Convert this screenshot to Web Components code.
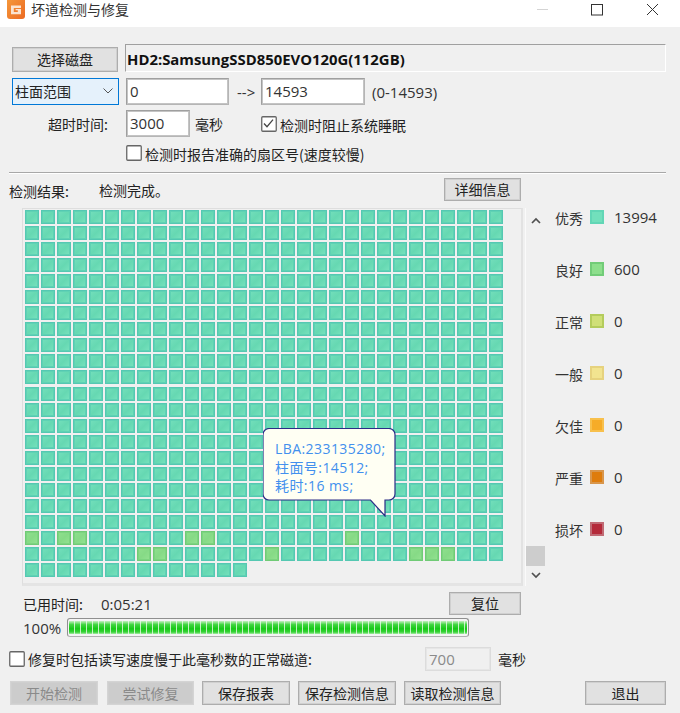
<!DOCTYPE html>
<html lang="zh">
<head>
<meta charset="utf-8">
<title>坏道检测与修复</title>
<style>
  html, body { margin: 0; padding: 0; background: #f0f0f0; }
  body { font: 14px "Noto Sans CJK SC", "Open Sans", sans-serif; color: #222; }
</style>
</head>
<body>
<bad-sector-dialog></bad-sector-dialog>

<script>
const UI_FONT = '"Open Sans", "Noto Sans CJK SC", sans-serif';

// Title bar with icon and the three window buttons
class WinTitlebar extends HTMLElement {
  constructor() {
    super();
    this.attachShadow({ mode: 'open' });
  }
  connectedCallback() {
    this.shadowRoot.innerHTML = `
      <style>
        :host { display: flex; align-items: flex-start; height: 27px; background: #fff; overflow: hidden; }
        .icon { margin-left: 7px; width: 18px; height: 19px; flex: none; }
        .title { margin-left: 6px; font-size: 14px; line-height: 19px; color: #333; flex: 1; }
        svg.ctl { flex: none; display: block; }
      </style>
      <svg class="icon" viewBox="0 0 18 19">
        <defs><linearGradient id="o" x1="0" y1="0" x2="1" y2="1"><stop offset="0" stop-color="#f59a3c"/><stop offset="1" stop-color="#ec6a22"/></linearGradient></defs>
        <rect x="0" y="-3" width="18" height="22" rx="3" fill="url(#o)"/>
        <path d="M4 5.500h10v2.400H6.800v4.200h4V10.300H8.600V8.900h5.400v5.400H4z" fill="#fbe3cf"/>
      </svg>
      <span class="title"><slot></slot></span>
      <svg class="ctl" width="176" height="20" viewBox="0 0 176 20">
        <path d="M33 9.500h11" stroke="#d4d4d4" stroke-width="1"/>
        <rect x="87.500" y="4.500" width="11" height="10.500" fill="none" stroke="#333"/>
        <path d="M143 4l11 11M154 4l-11 11" stroke="#333" fill="none"/>
      </svg>
    `;
  }
}

// Plain gray push button, "disabled" attribute greys it out
class WinButton extends HTMLElement {
  constructor() {
    super();
    this.attachShadow({ mode: 'open' });
  }
  connectedCallback() {
    this.shadowRoot.innerHTML = `
      <style>
        :host {
          display: flex; align-items: center; justify-content: center;
          box-sizing: border-box; flex: none; padding-bottom: 1px;
          background: #e1e1e1; border: 1px solid #adadad; outline: 1px solid #d0d0d0; outline-offset: -2px;
          font-size: 14px; color: #222; white-space: nowrap;
        }
        :host([disabled]) { background: #cccccc; border-color: #d4d4d4; outline-color: #cfcfcf; color: #8a8a8a; }
      </style>
      <slot></slot>
    `;
  }
}

// Edit box with a fixed width from the attribute
class WinInput extends HTMLElement {
  constructor() {
    super();
    this.attachShadow({ mode: 'open' });
  }
  connectedCallback() {
    this.shadowRoot.innerHTML = `
      <style>
        :host {
          display: flex; align-items: center; box-sizing: border-box; flex: none;
          background: #fff; border: 1px solid #9f9f9f; border-right-color: #b5b5b5; border-bottom-color: #b5b5b5;
          outline: 1px solid #c4c4c4; outline-offset: -2px;
          padding: 0 0 1px 3px; font: 15px ${UI_FONT}; color: #333;
        }
        :host([disabled]) { background: #f0f0f0; border-color: #dcdcdc; outline-color: #e6e6e6; color: #8a8a8a; }
      </style>
      <slot></slot>
    `;
  }
}

class WinCheck extends HTMLElement {
  constructor() {
    super();
    this.attachShadow({ mode: 'open' });
  }
  connectedCallback() {
    const mark = this.hasAttribute('checked')
      ? '<path d="M3 7.500l3 3.200 6-7" fill="none" stroke="#444" stroke-width="1.300"/>' : '';
    this.shadowRoot.innerHTML = `
      <style>
        :host { display: flex; align-items: center; flex: none; white-space: nowrap; font-size: 14px; color: #222; }
        svg { flex: none; margin-right: 3px; display: block; }
      </style>
      <svg width="16" height="16" viewBox="0 0 16 16">
        <rect x=".75" y=".75" width="14.500" height="14.500" rx="1" fill="#fff" stroke="#666" stroke-width="1.300"/>
        ${mark}
      </svg>
      <slot></slot>
    `;
  }
}

// Map of sector blocks: 30 columns, drawn from JS as real cells
class SectorMap extends HTMLElement {
  constructor() {
    super();
    this.attachShadow({ mode: 'open' });
  }
  connectedCallback() {
    const good = { 20: [0, 2, 3, 10, 11, 20], 21: [7, 8, 15, 24, 25, 26] };
    let cells = '';
    for (let r = 0; r < 23; r++) {
      const cols = r === 22 ? 14 : 30;
      for (let c = 0; c < cols; c++) {
        const isGood = good[r] && good[r].includes(c);
        cells += `<i class="${isGood ? 'g' : 'x'}"></i>`;
      }
    }
    this.shadowRoot.innerHTML = `
      <style>
        :host {
          display: block; position: relative; box-sizing: border-box; flex: none;
          width: 501px; height: 378px; padding: 1px 0 0 2px;
          background: #f0f0f0;
          border: 1px solid #dedede; border-right: 2px solid #e2e2e2; border-bottom: 3px solid #e4e4e4;
        }
        .grid { display: grid; grid-template-columns: repeat(30, 14px); grid-auto-rows: 14px; column-gap: 2.030px; row-gap: 2.050px; }
        i { display: block; box-sizing: border-box; border: 1px solid; }
        .x {
          border-color: #55c8b2;
          box-shadow: inset 0 0 0 1px #5fd2b4;
          background: linear-gradient(135deg, #74dfbc, #66d8b2 50%, #78e2be);
        }
        .g {
          border-color: #70cb76;
          box-shadow: inset 0 0 0 1px #7cd480;
          background: linear-gradient(135deg, #90e08e, #86da86 50%, #94e292);
        }
        .tip { position: absolute; left: 240px; top: 219px; }
      </style>
      <div class="grid">${cells}</div>
      <div class="tip"><slot></slot></div>
    `;
  }
}

// Speech-bubble tooltip over the map
class LbaTip extends HTMLElement {
  constructor() {
    super();
    this.attachShadow({ mode: 'open' });
  }
  connectedCallback() {
    this.shadowRoot.innerHTML = `
      <style>
        :host { display: block; position: relative; width: 133px; height: 89px; }
        svg { position: absolute; left: 0; top: 0; }
        .txt {
          position: relative; padding: 12px 0 0 12px;
          font: 14px/18.500px ${UI_FONT}; letter-spacing: .43px; color: #4290ee; white-space: nowrap;
        }
      </style>
      <svg width="133" height="89" viewBox="0 0 133 89">
        <path d="M6 .5H126a6 6 0 0 1 6 6V66a6 6 0 0 1-6 6H122V88L107.500 72H6a6 6 0 0 1-6-6V6.500a6 6 0 0 1 6-6z"
          fill="#fffff3" stroke="#2c2c86" stroke-width="1.200"/>
      </svg>
      <div class="txt"><slot></slot></div>
    `;
  }
}

class LegendItem extends HTMLElement {
  constructor() {
    super();
    this.attachShadow({ mode: 'open' });
  }
  connectedCallback() {
    const a = this.getAttribute('edge');
    const b = this.getAttribute('fill');
    this.shadowRoot.innerHTML = `
      <style>
        :host { display: flex; align-items: center; height: 14px; margin-bottom: 38px; font-size: 14px; color: #333; }
        .name { width: 35px; flex: none; padding-top: 2px; }
        .sw { width: 14px; height: 14px; box-sizing: border-box; border: 2px solid ${a}; background: ${b}; flex: none; }
        .num { margin-left: 10px; font: 15px ${UI_FONT}; color: #333; }
      </style>
      <span class="name"><slot></slot></span>
      <span class="sw"></span>
      <span class="num">${this.getAttribute('count')}</span>
    `;
  }
}

class ProgressStrip extends HTMLElement {
  constructor() {
    super();
    this.attachShadow({ mode: 'open' });
  }
  connectedCallback() {
    this.shadowRoot.innerHTML = `
      <style>
        :host {
          display: block; box-sizing: border-box; width: 402px; height: 19px; flex: none; padding: 2px 1px;
          background: #f4f4f4; border: 1px solid #8f8f8f; border-bottom-color: #b0b0b0; border-radius: 3px;
        }
        .bar {
          height: 100%;
          background:
            repeating-linear-gradient(90deg, transparent 0 5px, rgba(235,250,235,.8) 5px 6px),
            linear-gradient(180deg, #c4f0c0 0, #3fd53f 28%, #16c916 60%, #38d438 85%, #a8eaa6 100%);
        }
      </style>
      <div class="bar"></div>
    `;
  }
}

class ScrollColumn extends HTMLElement {
  constructor() {
    super();
    this.attachShadow({ mode: 'open' });
  }
  connectedCallback() {
    this.shadowRoot.innerHTML = `
      <style>
        :host {
          display: flex; flex-direction: column; align-items: center; box-sizing: border-box;
          width: 20px; height: 378px; flex: none; border-left: 1px solid #fafafa;
        }
        svg { display: block; flex: none; }
        .top { margin-top: 9px; }
        .fill { flex: 1; }
        .thumb { width: 19px; height: 20px; background: #cdcdcd; flex: none; }
        .bottom { margin: 5px 0 7px; }
      </style>
      <svg class="top" width="10" height="8" viewBox="0 0 10 8"><path d="M1 6l4-4 4 4" fill="none" stroke="#505050" stroke-width="1.700"/></svg>
      <div class="fill"></div>
      <div class="thumb"></div>
      <svg class="bottom" width="10" height="8" viewBox="0 0 10 8"><path d="M1 2l4 4 4-4" fill="none" stroke="#505050" stroke-width="1.700"/></svg>
    `;
  }
}

// The whole dialog
class BadSectorDialog extends HTMLElement {
  constructor() {
    super();
    this.attachShadow({ mode: 'open' });
  }
  connectedCallback() {
    this.shadowRoot.innerHTML = `
      <style>
        :host { display: block; width: 680px; height: 713px; overflow: hidden; background: #f0f0f0; font: 14px "Noto Sans CJK SC", sans-serif; color: #222; }
        .row { display: flex; align-items: center; }
        .num { font-family: ${UI_FONT}; font-size: 15px; color: #333; }
        .low { display: block; margin: 1px 0 -1px; }
        .disk {
          box-sizing: border-box; width: 541px; height: 28px; margin-left: 7px; padding: 2px 0 0 1px;
          display: flex; align-items: center;
          border: 1px solid; border-color: #a0a0a0 #fff #fff #a0a0a0;
          font: bold 14.880px "Open Sans", sans-serif; color: #111;
        }
        .sep { height: 0; margin: 0 14px 0 9px; border-top: 1px solid #a8a8a8; border-bottom: 1px solid #fff; }
        .mapwrap { display: flex; align-items: flex-start; }
        .legend { margin-left: 10px; padding-top: 2px; }
      </style>

      <win-titlebar>坏道检测与修复</win-titlebar>

      <div class="row" style="padding:17px 0 0 12px;align-items:flex-end">
        <win-button style="width:106px;height:25px">选择磁盘</win-button>
        <div class="disk">HD2:SamsungSSD850EVO120G(112GB)</div>
      </div>

      <div class="row" style="padding:6px 0 0 12px">
        <win-combo style="width:107px;height:27px">柱面范围</win-combo>
        <win-input style="width:103px;height:27px;margin-left:7px">0</win-input>
        <span class="num" style="margin-left:8px;width:24px">--&gt;</span>
        <win-input style="width:104px;height:27px">14593</win-input>
        <span class="num" style="margin-left:7px">(0-14593)</span>
      </div>

      <div class="row" style="padding:5px 0 0 48px">
        <span style="width:78px">超时时间:</span>
        <win-input style="width:64px;height:27px">3000</win-input>
        <span style="margin-left:5px;width:66px">毫秒</span>
        <win-check checked><span class="low">检测时阻止系统睡眠</span></win-check>
      </div>

      <div class="row" style="padding:6px 0 0 126px">
        <win-check><span class="low">检测时报告准确的扇区号(速度较慢)</span></win-check>
      </div>

      <div class="sep" style="margin-top:9px"></div>

      <div class="row" style="padding:4px 0 0 9px;height:23px">
        <span style="width:90px;padding-top:3px">检测结果:</span>
        <span style="width:345px">检测完成。</span>
        <win-button style="width:77px;height:23px">详细信息</win-button>
      </div>

      <div class="mapwrap" style="padding:7px 0 0 22px">
        <sector-map>
          <lba-tip>LBA:233135280;<br>柱面号:14512;<br>耗时:16 ms;</lba-tip>
        </sector-map>
        <scroll-column style="margin-left:2px"></scroll-column>
        <div class="legend">
          <legend-item edge="#62d6b6" fill="#72e0bc" count="13994">优秀</legend-item>
          <legend-item edge="#72cc78" fill="#8ddf8c" count="600">良好</legend-item>
          <legend-item edge="#b4cc5c" fill="#d0e078" count="0">正常</legend-item>
          <legend-item edge="#e6d27e" fill="#f2e490" count="0">一般</legend-item>
          <legend-item edge="#f8c04c" fill="#f6ac28" count="0">欠佳</legend-item>
          <legend-item edge="#d8964c" fill="#de7c0c" count="0">严重</legend-item>
          <legend-item edge="#c06a74" fill="#b42a3a" count="0">损坏</legend-item>
        </div>
      </div>

      <div class="row" style="padding:6px 0 0 23px;height:23px">
        <span style="width:78px">已用时间:</span>
        <span class="num" style="width:348px">0:05:21</span>
        <win-button style="width:72px;height:23px">复位</win-button>
      </div>

      <div class="row" style="padding:3px 0 0 23px;height:19px">
        <span class="num" style="width:44px">100%</span>
        <progress-strip></progress-strip>
      </div>

      <div class="row" style="padding:10px 0 0 9px;height:24px">
        <win-check style="width:416px">修复时包括读写速度慢于此毫秒数的正常磁道:</win-check>
        <win-input disabled style="width:66px;height:24px">700</win-input>
        <span style="margin-left:7px">毫秒</span>
      </div>

      <div class="row" style="padding:10px 0 0 10px">
        <win-button disabled style="width:88px;height:24px">开始检测</win-button>
        <win-button disabled style="width:87px;height:24px;margin-left:9px">尝试修复</win-button>
        <win-button style="width:88px;height:24px;margin-left:8px">保存报表</win-button>
        <win-button style="width:98px;height:24px;margin-left:8px">保存检测信息</win-button>
        <win-button style="width:97px;height:24px;margin-left:8px">读取检测信息</win-button>
        <win-button style="width:81px;height:24px;margin-left:84px">退出</win-button>
      </div>
    `;
  }
}

// Focused combo box, blue highlight like the reference
class WinCombo extends HTMLElement {
  constructor() {
    super();
    this.attachShadow({ mode: 'open' });
  }
  connectedCallback() {
    this.shadowRoot.innerHTML = `
      <style>
        :host {
          display: flex; align-items: center; justify-content: space-between; box-sizing: border-box; flex: none;
          background: #e5f1fb; border: 1px solid #0078d7; padding: 0 5px 1px 2px; font-size: 14px; color: #222;
        }
      </style>
      <slot></slot>
      <svg width="10" height="6" viewBox="0 0 10 6"><path d="M.5 .5L5 5 9.500 .5" fill="none" stroke="#555"/></svg>
    `;
  }
}

customElements.define('win-titlebar', WinTitlebar);
customElements.define('win-button', WinButton);
customElements.define('win-input', WinInput);
customElements.define('win-check', WinCheck);
customElements.define('win-combo', WinCombo);
customElements.define('sector-map', SectorMap);
customElements.define('lba-tip', LbaTip);
customElements.define('legend-item', LegendItem);
customElements.define('progress-strip', ProgressStrip);
customElements.define('scroll-column', ScrollColumn);
customElements.define('bad-sector-dialog', BadSectorDialog);
</script>
</body>
</html>
